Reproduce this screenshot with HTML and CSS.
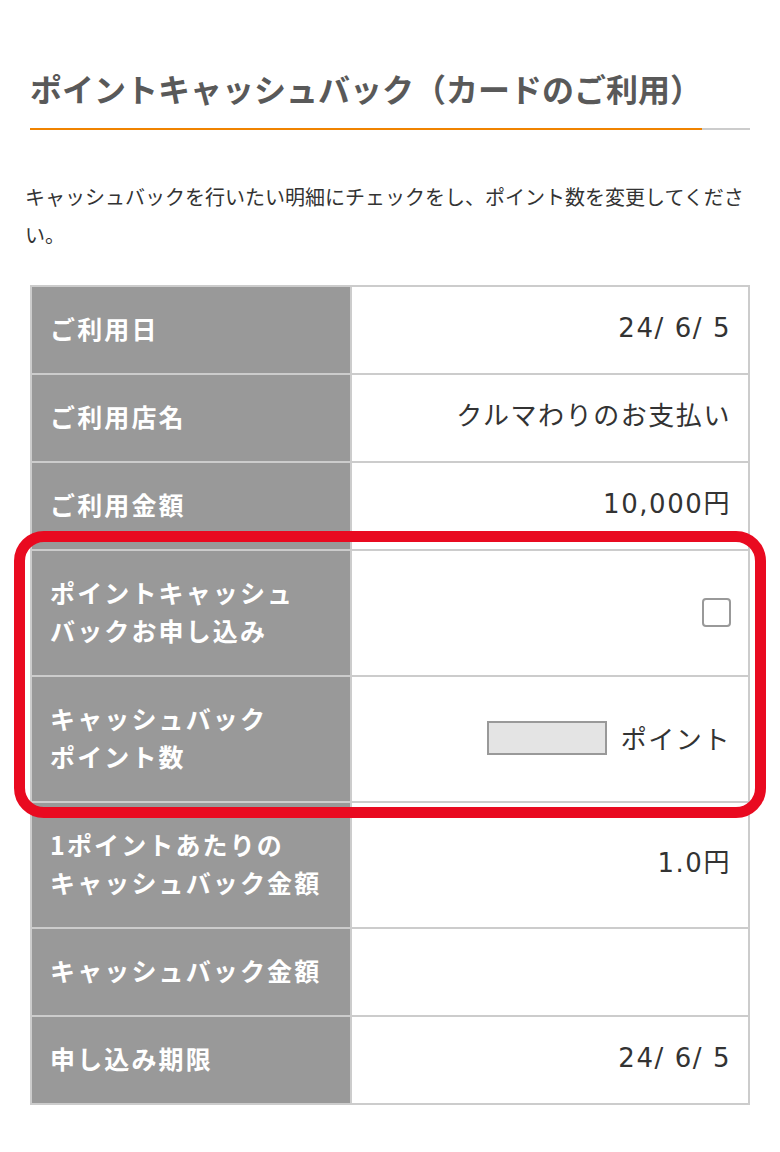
FILE: index.html
```html
<!DOCTYPE html>
<html lang="ja">
<head>
    <meta charset="UTF-8">
    <title>ポイントキャッシュバック（カードのご利用）</title>
    <link rel="stylesheet" href="styles.css">
</head>
<body>
    <div class="page">
        <h1 class="title">ポイントキャッシュバック（カードのご利用）</h1>
        <p class="lead">キャッシュバックを行いたい明細にチェックをし、ポイント数を変更してください。</p>

        <div class="detail-wrap">
            <table class="detail">
                <tr>
                    <th>ご利用日</th>
                    <td>24/ 6/ 5</td>
                </tr>
                <tr>
                    <th>ご利用店名</th>
                    <td>クルマわりのお支払い</td>
                </tr>
                <tr>
                    <th>ご利用金額</th>
                    <td>10,000円</td>
                </tr>
                <tr>
                    <th>ポイントキャッシュ<br>バックお申し込み</th>
                    <td><input type="checkbox" class="check" name="apply"></td>
                </tr>
                <tr>
                    <th>キャッシュバック<br>ポイント数</th>
                    <td><input type="text" class="points" name="points" disabled><span class="unit">ポイント</span></td>
                </tr>
                <tr>
                    <th>1ポイントあたりの<br>キャッシュバック金額</th>
                    <td>1.0円</td>
                </tr>
                <tr>
                    <th>キャッシュバック金額</th>
                    <td></td>
                </tr>
                <tr>
                    <th>申し込み期限</th>
                    <td>24/ 6/ 5</td>
                </tr>
            </table>
            <div class="mark"></div>
        </div>
    </div>
</body>
</html>
```

FILE: styles.css
```css
body { margin: 0; padding: 0; background-color: #fff; font-family: "Noto Sans CJK JP", sans-serif; color: #333; }
.page { padding: 0 25px; }
.title { margin: 0 5px -2px; padding: 70px 0 22px; font-size: 32px; line-height: 36px; letter-spacing: 0; color: #595959; font-weight: bold; border-bottom: 2px solid #ccc; border-image: linear-gradient(to right, #f08300 0, #f08300 672px, #ccc 672px) 0 0 1 0; }
.lead { margin: 50px 0 0; font-size: 20px; line-height: 38px; }
.detail-wrap { position: relative; margin: 31px 5px 0; }
.detail { width: 100%; border-collapse: collapse; border: 2px solid #ccc; }
.detail th, .detail td { border: 2px solid #ccc; padding: 22px 18px 26px; line-height: 38px; }
.detail th { width: 282px; background-color: #999; color: #fff; text-align: left; font-size: 25px; letter-spacing: 0.085em; font-weight: bold; }
.detail td { text-align: right; font-family: "DejaVu Sans", "Noto Sans CJK JP", sans-serif; font-size: 26px; letter-spacing: 0.06em; padding-right: 17px; color: #333; }
.check { appearance: none; -webkit-appearance: none; width: 29px; height: 29px; margin: 0; border: 2px solid #999; border-radius: 4px; background: #fff; vertical-align: middle; }
.points { width: 120px; height: 34px; box-sizing: border-box; margin: 0 14px 0 0; border: 2px solid #999; background: #e4e4e4; vertical-align: middle; }
.unit { font-family: "Noto Sans CJK JP", sans-serif; vertical-align: middle; }
.mark { position: absolute; left: -16px; top: 246px; width: 752px; height: 287px; box-sizing: border-box; border: 11px solid #e90a20; border-radius: 30px; pointer-events: none; }
```
